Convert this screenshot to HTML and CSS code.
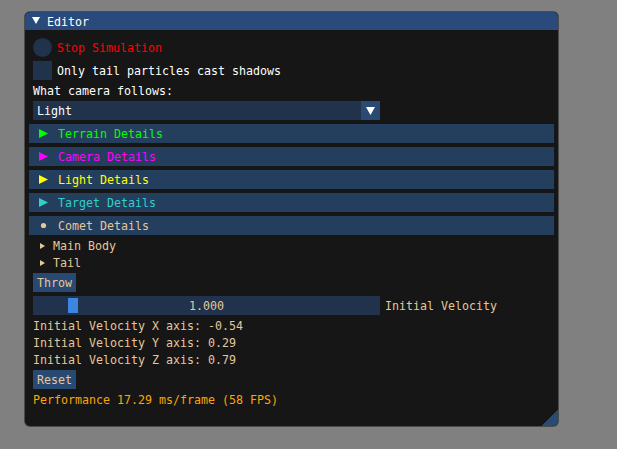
FILE: index.html
```html
<!DOCTYPE html>
<html>
<head>
<meta charset="utf-8">
<link rel="stylesheet" href="styles.css">
</head>
<body>
<div class="window">
  <div class="titlebar">
    <svg class="title-arrow" width="8" height="7" viewBox="0 0 8 7"><polygon points="0,0 8,0 4,7" fill="#fff"/></svg>
    <span class="t">Editor</span>
  </div>
  <div class="content">
    <div class="row"><span class="radio"></span><span class="t red">Stop Simulation</span></div>
    <div class="row"><span class="check"></span><span class="t">Only tail particles cast shadows</span></div>
    <div class="line">What camera follows:</div>
    <div class="combo">
      <span class="t combo-text">Light</span>
      <span class="combo-btn"><svg width="9" height="8" viewBox="0 0 9 8"><polygon points="0,0 9,0 4.5,8" fill="#fff"/></svg></span>
    </div>
    <div class="header c-green"><svg class="h-arrow" width="9" height="9" viewBox="0 0 9 9"><polygon points="0,0 9,4.5 0,9" fill="currentColor"/></svg><span class="t">Terrain Details</span></div>
    <div class="header c-magenta"><svg class="h-arrow" width="9" height="9" viewBox="0 0 9 9"><polygon points="0,0 9,4.5 0,9" fill="currentColor"/></svg><span class="t">Camera Details</span></div>
    <div class="header c-yellow"><svg class="h-arrow" width="9" height="9" viewBox="0 0 9 9"><polygon points="0,0 9,4.5 0,9" fill="currentColor"/></svg><span class="t">Light Details</span></div>
    <div class="header c-teal"><svg class="h-arrow" width="9" height="9" viewBox="0 0 9 9"><polygon points="0,0 9,4.5 0,9" fill="currentColor"/></svg><span class="t">Target Details</span></div>
    <div class="header c-beige"><svg class="h-arrow" width="9" height="9" viewBox="0 0 9 9"><circle cx="4.5" cy="4.5" r="2.6" fill="currentColor"/></svg><span class="t">Comet Details</span></div>
    <div class="tree"><svg class="t-arrow" width="5" height="6" viewBox="0 0 5 6"><polygon points="0,0 5,3 0,6" fill="currentColor"/></svg><span class="t">Main Body</span></div>
    <div class="tree"><svg class="t-arrow" width="5" height="6" viewBox="0 0 5 6"><polygon points="0,0 5,3 0,6" fill="currentColor"/></svg><span class="t">Tail</span></div>
    <div><span class="btn">Throw</span></div>
    <div class="slider-row">
      <div class="slider"><span class="grab"></span><span class="t slider-val">1.000</span></div>
      <span class="t beige">Initial Velocity</span>
    </div>
    <div class="line beige">Initial Velocity X axis: -0.54</div>
    <div class="line beige">Initial Velocity Y axis: 0.29</div>
    <div class="line beige">Initial Velocity Z axis: 0.79</div>
    <div><span class="btn">Reset</span></div>
    <div class="line orange">Performance 17.29 ms/frame (58 FPS)</div>
  </div>
  <div class="grip"></div>
</div>
</body>
</html>
```
FILE: styles.css
```css
html, body {
  margin: 0;
  padding: 0;
  background: #808080;
  width: 617px;
  height: 449px;
  overflow: hidden;
}
body {
  padding: 12px 0 0 25px;
  box-sizing: border-box;
  font-family: "DejaVu Sans Mono", "Liberation Mono", monospace;
  font-size: 11.63px;
  line-height: 13px;
  color: #ffffff;
}
.window {
  position: relative;
  width: 533px;
  height: 414px;
  background: #161616;
  border-radius: 5px;
  box-shadow: 0 0 0 1px rgba(40, 40, 45, 0.6);
  overflow: hidden;
}
.t { padding-top: 2px; }
.titlebar {
  height: 18px;
  background: #294a7a;
  display: flex;
  align-items: center;
  padding-left: 7px;
  gap: 7px;
  border-radius: 5px 5px 0 0;
}
.title-arrow { display: block; margin-top: -1px; }
.content {
  padding: 8px 8px 0 8px;
  display: flex;
  flex-direction: column;
  gap: 4px;
}
.row {
  display: flex;
  align-items: center;
  gap: 5px;
  height: 19px;
}
.radio {
  width: 19px;
  height: 19px;
  border-radius: 50%;
  background: #20324c;
  flex: none;
}
.check {
  width: 19px;
  height: 19px;
  background: #20324c;
  flex: none;
}
.red { color: #ff0000; }
.beige { color: #e6c799; }
.orange { color: #ffa500; }
.line { height: 13px; line-height: 15px; white-space: pre; }
.combo {
  width: 347px;
  height: 19px;
  background: #20324c;
  display: flex;
  align-items: center;
  justify-content: space-between;
}
.combo-text { padding-left: 4px; }
.combo-btn {
  width: 19px;
  height: 19px;
  background: #294a73;
  display: flex;
  align-items: center;
  justify-content: center;
}
.combo-btn svg { display: block; }
.header {
  height: 19px;
  margin: 0 -4px 0 -4px;
  background: #243e5d;
  display: flex;
  align-items: center;
  padding-left: 10px;
}
.h-arrow { display: block; flex: none; margin-right: 10px; }
.c-green { color: #00ff00; }
.c-magenta { color: #ff00ff; }
.c-yellow { color: #ffff00; }
.c-teal { color: #33d0c8; }
.c-beige { color: #e6c799; }
.tree {
  height: 13px;
  display: flex;
  align-items: center;
  color: #e6c799;
  padding-left: 7px;
}
.t-arrow { display: block; flex: none; margin-right: 8px; }
.btn {
  display: inline-block;
  height: 19px;
  line-height: 21px;
  padding: 0 4px;
  background: #284971;
  color: #e6c799;
  vertical-align: top;
  overflow: hidden;
}
.slider-row {
  display: flex;
  align-items: center;
  gap: 5px;
  height: 19px;
}
.slider {
  position: relative;
  width: 347px;
  height: 19px;
  background: #20324c;
  display: flex;
  align-items: center;
  justify-content: center;
  color: #e6c799;
}
.grab {
  position: absolute;
  left: 35px;
  top: 2px;
  width: 10px;
  height: 15px;
  background: #3d85e0;
}
.slider-val { position: relative; }
.grip {
  position: absolute;
  right: 0;
  bottom: 0;
  width: 16px;
  height: 16px;
  background: linear-gradient(135deg, transparent 50%, #294a73 50%);
}
```
